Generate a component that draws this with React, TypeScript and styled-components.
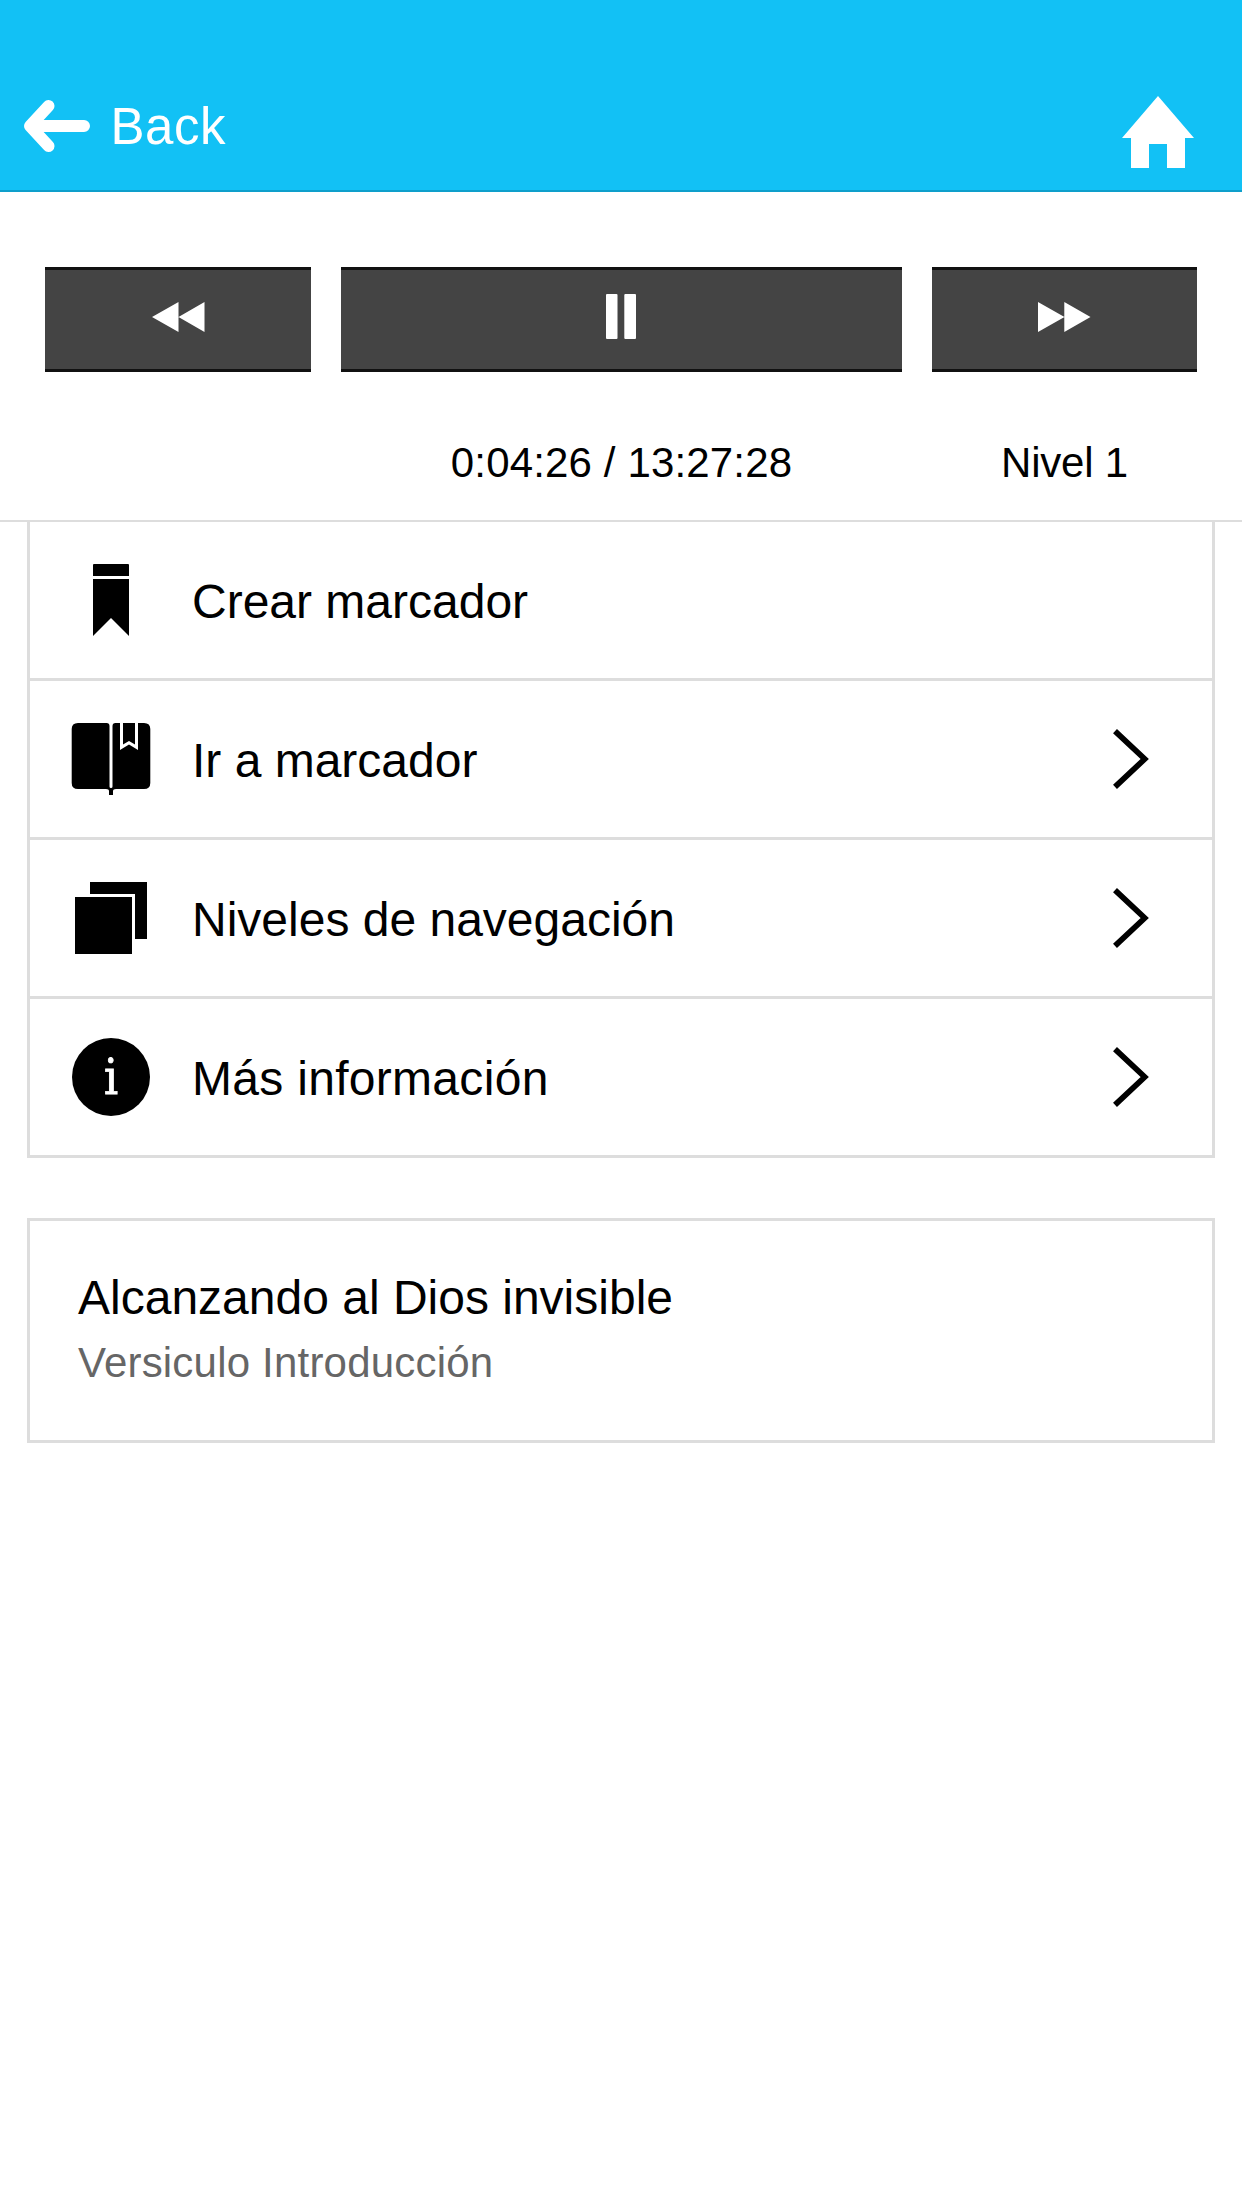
import React from "react";
import styled, { createGlobalStyle } from "styled-components";

const GlobalStyle = createGlobalStyle`
  *, *::before, *::after { box-sizing: border-box; }
  body {
    margin: 0;
    background: #fff;
    color: #000;
    font-family: "Liberation Sans", Arial, Helvetica, sans-serif;
  }
`;

const Screen = styled.div`
  display: flex;
  flex-direction: column;
  width: 1242px;
  min-height: 2208px;
  background: #fff;
`;

const Header = styled.header`
  display: flex;
  align-items: flex-start;
  justify-content: space-between;
  height: 192px;
  padding: 96px 48px 0 24px;
  background: #12c1f5;
  border-bottom: 2px solid #0e9fcb;
`;

const Plain = styled.button`
  display: flex;
  padding: 0;
  border: 0;
  background: none;
  color: #fff;
  font: inherit;
`;

const BackLabel = styled.span`
  margin-left: 20.5px;
  font-size: 51px;
  line-height: 62px;
  letter-spacing: 0.5px;
`;

const Icon = styled.svg`
  display: block;
  flex: none;
`;

const Player = styled.section`
  display: flex;
  flex-direction: column;
  height: 330px;
  padding: 75px 45px 0;
  border-bottom: 2px solid #ddd;
`;

const Columns = styled.div`
  display: grid;
  grid-template-columns: 266px 561px 265px;
  column-gap: 30px;
`;

const Control = styled.button`
  display: flex;
  align-items: center;
  justify-content: center;
  height: 105px;
  padding: 0 0 6px;
  border: solid #111;
  border-width: 3px 0;
  background: #444;
`;

const Status = styled.span<{ $column: number; $tracking?: number }>`
  grid-column: ${(p) => p.$column};
  margin-top: 67px;
  font-size: 42px;
  line-height: 48px;
  letter-spacing: ${(p) => p.$tracking ?? 0}px;
  text-align: center;
`;

const Menu = styled.nav`
  margin: 0 27px;
  border: solid #ddd;
  border-width: 0 3px 3px;
`;

const Row = styled.div`
  display: flex;
  align-items: center;
  height: 159px;
  padding: 0 60px 0 39px;
  border-top: 3px solid #ddd;

  &:first-child {
    height: 156px;
    border-top: 0;
  }
`;

const Label = styled.span<{ $tracking?: number }>`
  flex: 1;
  margin-left: 39px;
  padding-top: 3px;
  font-size: 48px;
  line-height: 56px;
  letter-spacing: ${(p) => p.$tracking ?? 0}px;
`;

const Card = styled.section`
  height: 225px;
  margin: 60px 27px 0;
  padding: 49px 48px;
  border: 3px solid #ddd;
`;

const Title = styled.h1`
  margin: 0;
  font-size: 48px;
  font-weight: 400;
  line-height: 56px;
`;

const Subtitle = styled.p`
  margin: 13px 0 0;
  color: #666;
  font-size: 42px;
  line-height: 48px;
  letter-spacing: 0.2px;
`;

const InfoBadge = styled.span`
  display: flex;
  justify-content: center;
  flex: none;
  width: 78px;
  height: 78px;
  margin: 0 3px;
  border-radius: 50%;
  background: #000;
  color: #fff;
  font-family: "DejaVu Serif Condensed", "DejaVu Serif", serif;
  font-size: 49px;
  line-height: 79px;
  -webkit-text-stroke: 0.8px #fff;
`;

const BackArrow = () => (
  <Icon width="66" height="60" viewBox="0 0 66 60" fill="none" stroke="#fff" strokeWidth="12" strokeLinecap="round" strokeLinejoin="round">
    <path d="M60 30H9M24.5 10L6 30L24.5 50" />
  </Icon>
);

const HomeIcon = () => (
  <Icon width="72" height="72" viewBox="0 0 72 72" fill="#fff">
    <path d="M36 0L72 42H63V72H45V48H27V72H9V42H0Z" />
  </Icon>
);

const Rewind = () => (
  <Icon width="53" height="30" viewBox="0 0 53 30" fill="#fff">
    <path d="M0 15L26.5 0V30ZM26.5 15L52.5 0V30Z" />
  </Icon>
);

const Pause = () => (
  <Icon width="31" height="45" viewBox="0 0 31 45" fill="#fff">
    <rect width="11.5" height="45" rx="1" />
    <rect x="18.3" width="11.7" height="45" rx="1" />
  </Icon>
);

const Forward = () => (
  <Icon width="53" height="30" viewBox="0 0 53 30" fill="#fff">
    <path d="M0 0L26.5 15L0 30ZM26.3 0L52.5 15L26.3 30Z" />
  </Icon>
);

const BookmarkIcon = () => (
  <Icon width="84" height="84" viewBox="0 0 84 84">
    <path d="M24 7Q24 6 25 6H59Q60 6 60 7V18H24ZM24 21H60V78L42 60L24 78Z" />
  </Icon>
);

const BookIcon = () => (
  <Icon width="84" height="84" viewBox="0 0 84 84">
    <path d="M9 6H37.5Q40.5 6 40.5 9V69.5Q40.5 71 42 71Q43.5 71 43.5 69.5V9Q43.5 6 46.5 6H51V33L60 27.5L69 33V6H75Q81.3 6 81.3 12V66Q81.3 72 75 72H47Q44 72 44 74V78H40V74Q40 72 37 72H9Q2.7 72 2.7 66V12Q2.7 6 9 6Z" />
    <path d="M54 6H66V27.5L60 24L54 27.5Z" />
  </Icon>
);

const LevelsIcon = () => (
  <Icon width="84" height="84" viewBox="0 0 84 84">
    <path d="M21 6H78V63H66V18H21ZM6 21H63V78H6Z" />
  </Icon>
);

const Chevron = () => (
  <Icon width="40" height="60" viewBox="0 0 40 60" fill="none" stroke="#000" strokeWidth="5.7">
    <path d="M3 2.1L32.7 30L3 57.9" />
  </Icon>
);

const items = [
  { label: "Crear marcador", icon: <BookmarkIcon />, opens: false },
  { label: "Ir a marcador", icon: <BookIcon />, opens: true },
  { label: "Niveles de navegación", icon: <LevelsIcon />, opens: true },
  { label: "Más información", icon: <InfoBadge>i</InfoBadge>, opens: true, tracking: 0.3 },
];

export default function App() {
  return (
    <Screen>
      <GlobalStyle />
      <Header>
        <Plain>
          <BackArrow />
          <BackLabel>Back</BackLabel>
        </Plain>
        <Plain aria-label="Home">
          <HomeIcon />
        </Plain>
      </Header>
      <Player>
        <Columns>
          <Control aria-label="Rewind"><Rewind /></Control>
          <Control aria-label="Pause"><Pause /></Control>
          <Control aria-label="Forward"><Forward /></Control>
          <Status $column={2} $tracking={0.15}>0:04:26 / 13:27:28</Status>
          <Status $column={3} $tracking={-0.2}>Nivel 1</Status>
        </Columns>
      </Player>
      <Menu>
        {items.map((item) => (
          <Row key={item.label}>
            {item.icon}
            <Label $tracking={item.tracking}>{item.label}</Label>
            {item.opens && <Chevron />}
          </Row>
        ))}
      </Menu>
      <Card>
        <Title>Alcanzando al Dios invisible</Title>
        <Subtitle>Versiculo Introducción</Subtitle>
      </Card>
    </Screen>
  );
}
